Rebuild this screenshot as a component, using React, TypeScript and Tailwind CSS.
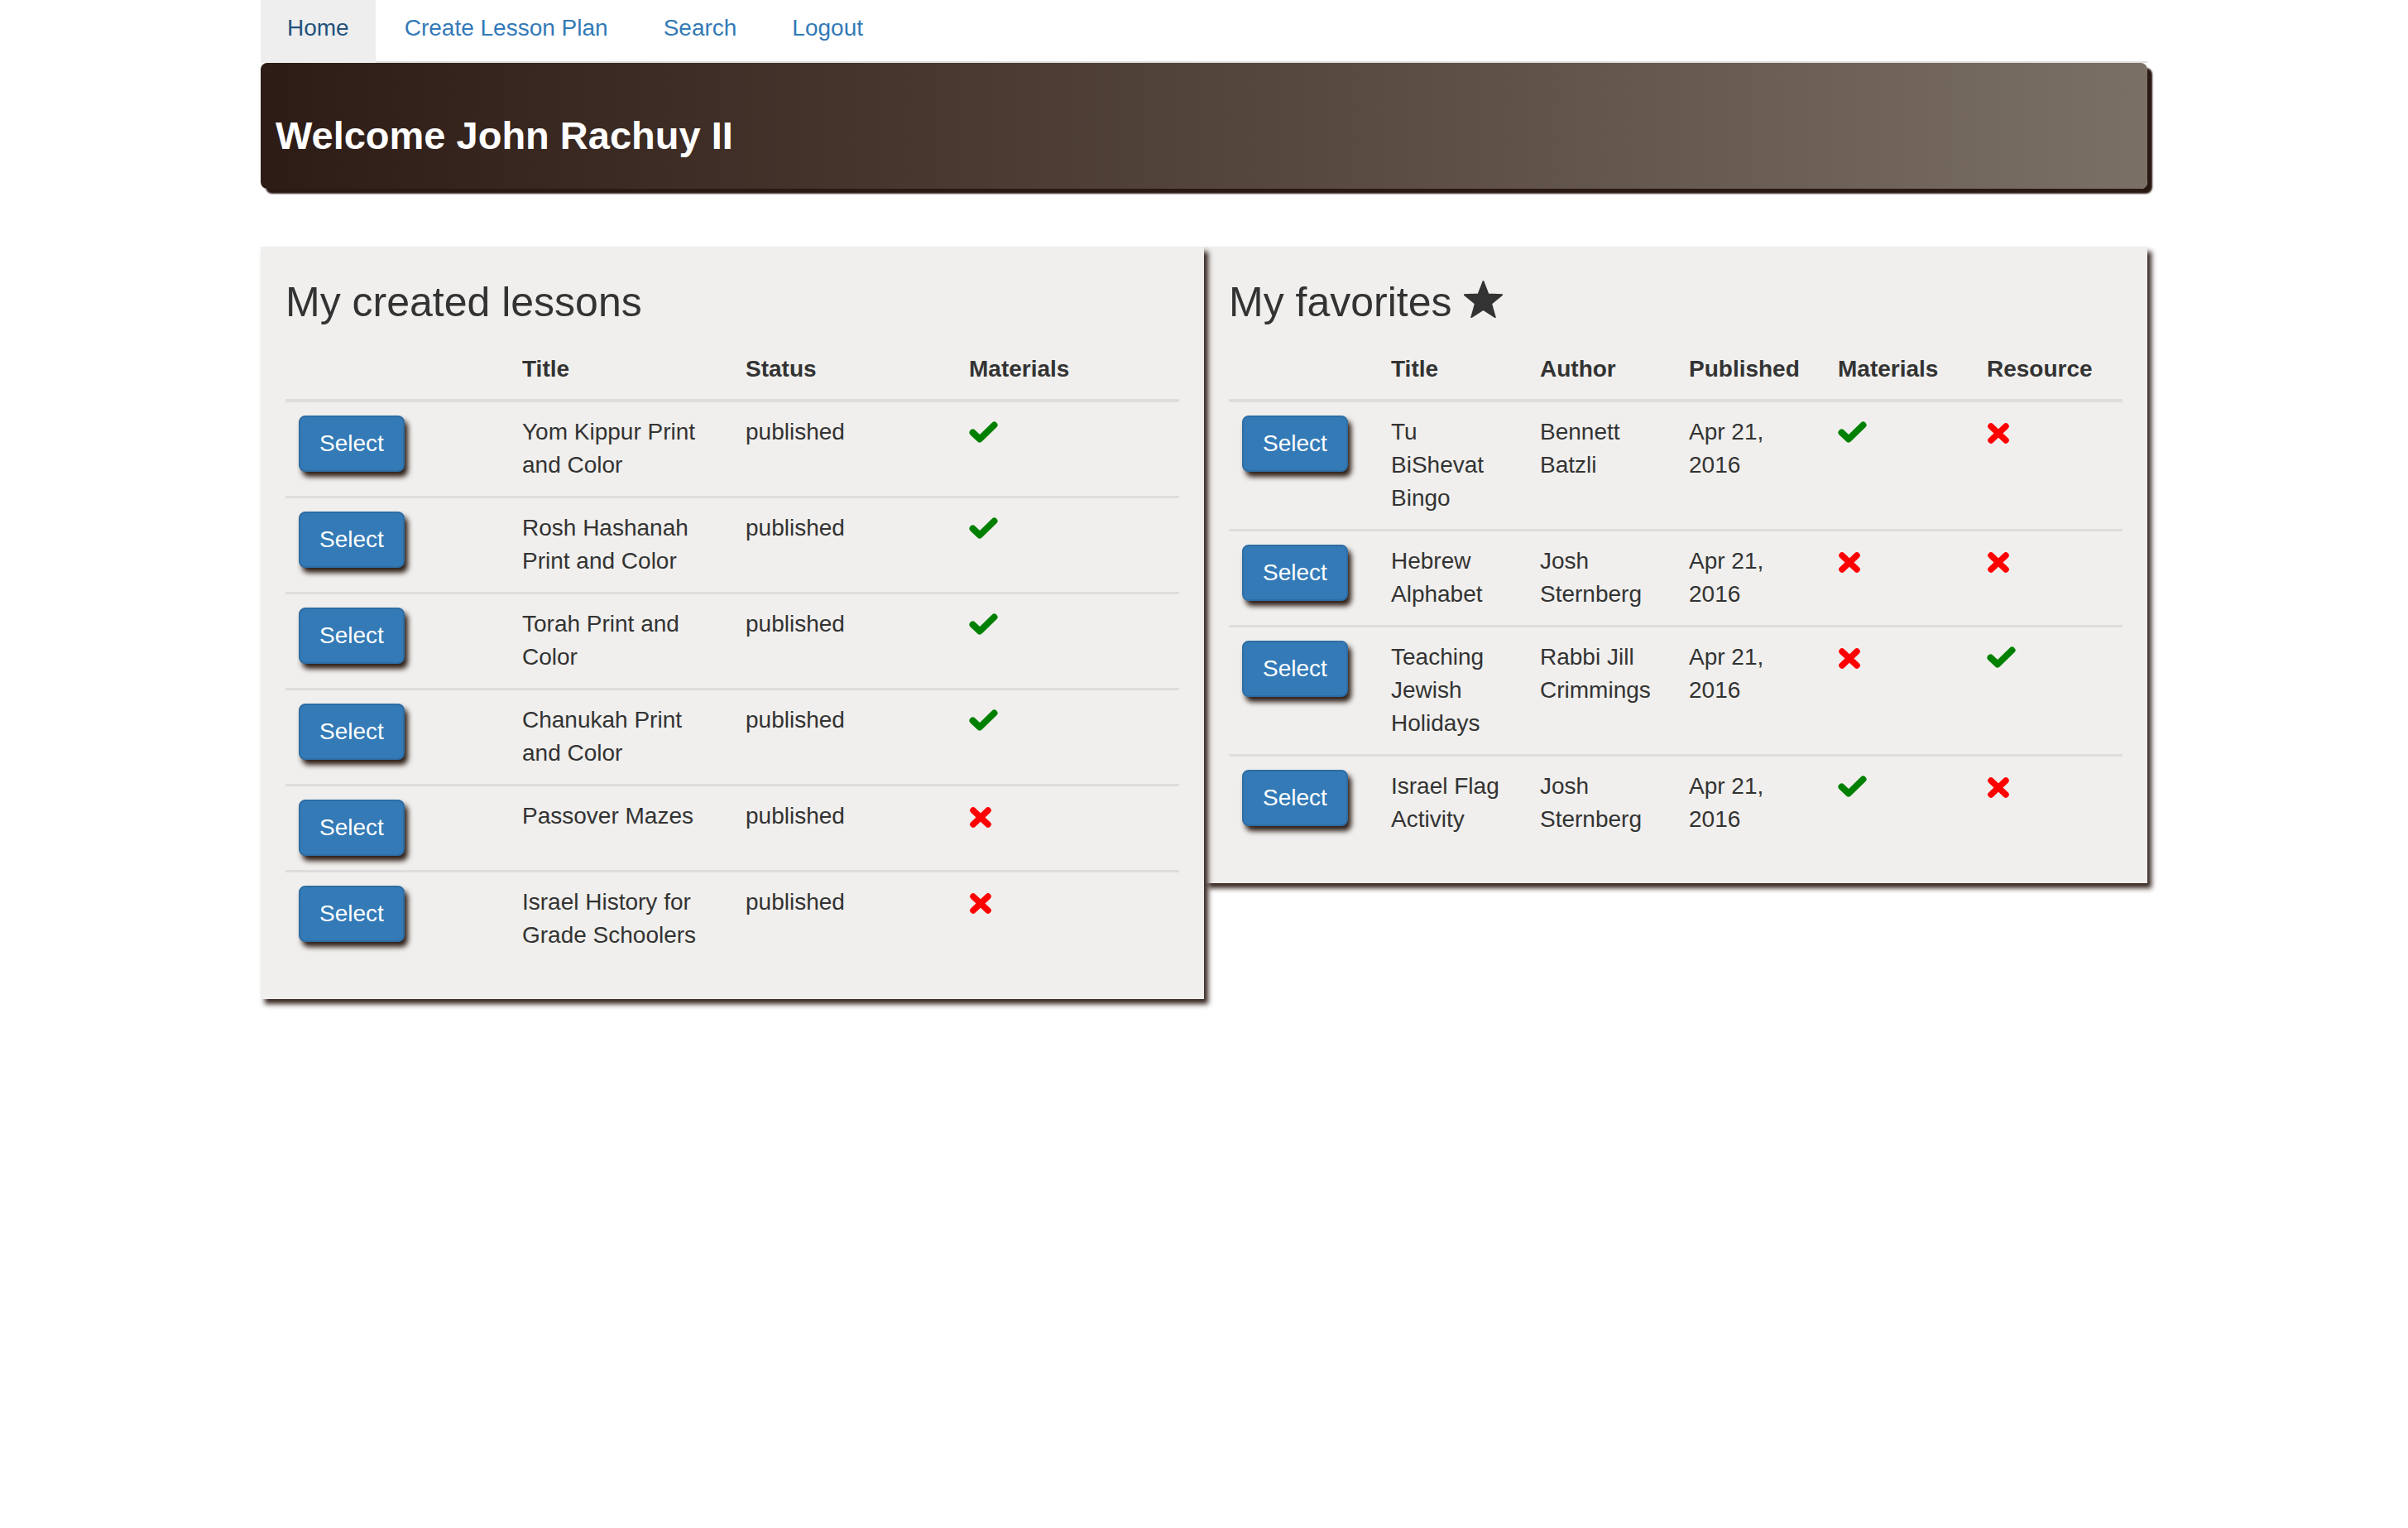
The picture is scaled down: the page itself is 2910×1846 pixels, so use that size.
import React from "react";

type Lesson = { title: string; status: string; materials: boolean };
type Favorite = {
  title: string;
  author: string;
  published: string;
  materials: boolean;
  resource: boolean;
};

const lessons: Lesson[] = [
  { title: "Yom Kippur Print and Color", status: "published", materials: true },
  { title: "Rosh Hashanah Print and Color", status: "published", materials: true },
  { title: "Torah Print and Color", status: "published", materials: true },
  { title: "Chanukah Print and Color", status: "published", materials: true },
  { title: "Passover Mazes", status: "published", materials: false },
  { title: "Israel History for Grade Schoolers", status: "published", materials: false },
];

const favorites: Favorite[] = [
  { title: "Tu BiShevat Bingo", author: "Bennett Batzli", published: "Apr 21, 2016", materials: true, resource: false },
  { title: "Hebrew Alphabet", author: "Josh Sternberg", published: "Apr 21, 2016", materials: false, resource: false },
  { title: "Teaching Jewish Holidays", author: "Rabbi Jill Crimmings", published: "Apr 21, 2016", materials: false, resource: true },
  { title: "Israel Flag Activity", author: "Josh Sternberg", published: "Apr 21, 2016", materials: true, resource: false },
];

const OkIcon = () => (
  <svg width="35" height="26" viewBox="0 0 35 26" className="block mt-[7px]">
    <path
      d="M4.5 13.5 L13 21.5 L30.5 4.5"
      fill="none"
      stroke="#008000"
      strokeWidth="8"
      strokeLinecap="round"
      strokeLinejoin="round"
    />
  </svg>
);

const RemoveIcon = () => (
  <svg width="28" height="27" viewBox="0 0 28 27" className="block mt-[8px]">
    <path
      d="M5 5 L23 22 M23 5 L5 22"
      fill="none"
      stroke="#ff0000"
      strokeWidth="7.5"
      strokeLinecap="round"
    />
  </svg>
);

const Status = ({ ok }: { ok: boolean }) => (ok ? <OkIcon /> : <RemoveIcon />);

const SelectButton = () => (
  <button className="h-[68px] px-[23px] rounded-[8px] border-2 border-[#2e6da4] bg-[#337ab7] text-white text-[28px] leading-[40px] shadow-[4px_6px_6px_#2e1e17]">
    Select
  </button>
);

const Th = ({ children }: { children?: React.ReactNode }) => (
  <th className="text-left font-bold px-4 pt-4 pb-4 leading-[40px] border-b-4 border-[#ddd]">
    {children}
  </th>
);

const Td = ({ children }: { children?: React.ReactNode }) => (
  <td className="align-top px-4 pt-4 pb-[17px] leading-[40px]">{children}</td>
);

const StarIcon = () => (
  <svg width="47" height="45" viewBox="0 0 47 45" className="inline-block align-[-2px] ml-[14px]">
    <polygon
      points="23.5,0.5 29.6,16.3 46.5,17.1 33.4,27.9 38,44.5 23.5,35.1 9,44.5 13.6,27.9 0.5,17.1 17.4,16.3"
      fill="#333"
      stroke="#333"
      strokeWidth="1.5"
      strokeLinejoin="round"
    />
  </svg>
);

export default function App() {
  return (
    <div className="min-h-screen bg-white font-['Liberation_Sans',Arial,sans-serif] text-[#333] text-[28px]">
      <div className="w-[2280px] mx-auto">
        {/* Nav */}
        <ul className="flex border-b-2 border-[#ddd] h-[76px]">
          <li className="mr-[3px] bg-[#eee] h-[76px] px-[32px] pt-[14px] leading-[40px] text-[#23527c]">
            Home
          </li>
          <li className="mr-[3px] px-[32px] pt-[14px] leading-[40px] text-[#337ab7]">Create Lesson Plan</li>
          <li className="mr-[3px] px-[32px] pt-[14px] leading-[40px] text-[#337ab7]">Search</li>
          <li className="mr-[3px] px-[32px] pt-[14px] leading-[40px] text-[#337ab7]">Logout</li>
        </ul>

        {/* Header */}
        <div className="h-[152px] rounded-[8px] bg-gradient-to-r from-[#2d1c15] to-[#7b7066] shadow-[6px_6px_2px_#2a1913] pl-[18px] pt-[62px]">
          <h1 className="text-[47px] font-bold leading-[52px] text-white">Welcome John Rachuy II</h1>
        </div>

        {/* Panels */}
        <div className="flex items-start mt-[70px]">
          <div className="relative z-10 w-[1140px] bg-[#f0efed] px-[30px] shadow-[5px_6px_6px_rgba(43,26,20,0.95)]">
            <h2 className="text-[50px] leading-[55px] mt-[40px] mb-[17px]">My created lessons</h2>
            <table className="w-full table-fixed border-collapse mb-[40px]">
              <thead>
                <tr>
                  <Th />
                  <Th>Title</Th>
                  <Th>Status</Th>
                  <Th>Materials</Th>
                </tr>
              </thead>
              <tbody>
                {lessons.map((l, i) => (
                  <tr key={l.title} className={i > 0 ? "border-t-[3px] border-[#ddd]" : ""}>
                    <Td>
                      <SelectButton />
                    </Td>
                    <Td>{l.title}</Td>
                    <Td>{l.status}</Td>
                    <Td>
                      <Status ok={l.materials} />
                    </Td>
                  </tr>
                ))}
              </tbody>
            </table>
          </div>

          <div className="w-[1140px] bg-[#f0efed] px-[30px] shadow-[5px_6px_6px_rgba(43,26,20,0.95)]">
            <h2 className="text-[50px] leading-[55px] mt-[40px] mb-[17px]">
              My favorites
              <StarIcon />
            </h2>
            <table className="w-full table-fixed border-collapse mb-[40px]">
              <thead>
                <tr>
                  <Th />
                  <Th>Title</Th>
                  <Th>Author</Th>
                  <Th>Published</Th>
                  <Th>Materials</Th>
                  <Th>Resource</Th>
                </tr>
              </thead>
              <tbody>
                {favorites.map((f, i) => (
                  <tr key={f.title} className={i > 0 ? "border-t-[3px] border-[#ddd]" : ""}>
                    <Td>
                      <SelectButton />
                    </Td>
                    <Td>{f.title}</Td>
                    <Td>{f.author}</Td>
                    <Td>{f.published}</Td>
                    <Td>
                      <Status ok={f.materials} />
                    </Td>
                    <Td>
                      <Status ok={f.resource} />
                    </Td>
                  </tr>
                ))}
              </tbody>
            </table>
          </div>
        </div>
      </div>
    </div>
  );
}
